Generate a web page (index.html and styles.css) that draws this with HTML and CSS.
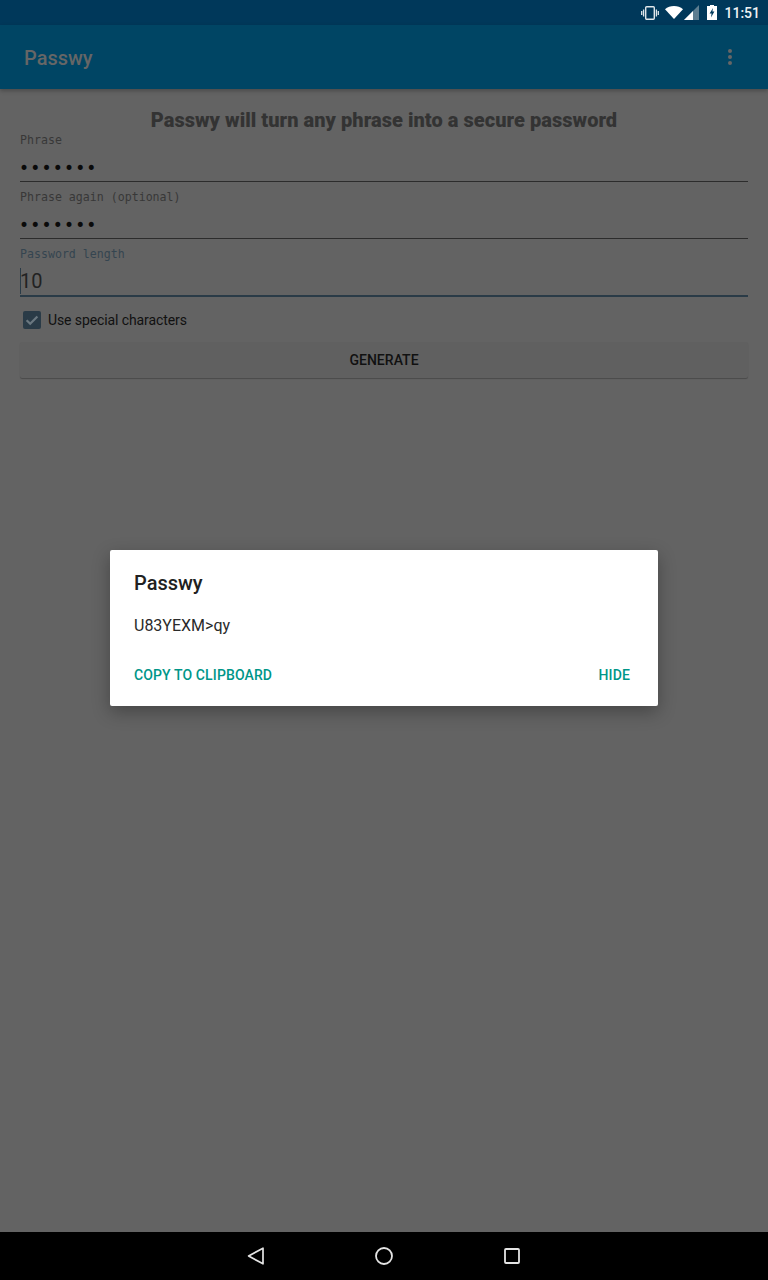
FILE: index.html
```html
<!DOCTYPE html>
<html lang="en">
<head>
<meta charset="utf-8">
<title>Passwy</title>
<link rel="stylesheet" href="styles.css">
</head>
<body>
<div class="screen">
  <div class="status">
    <svg class="ic-vib" width="18" height="14" viewBox="0 0 18 14"><rect x="4.7" y="0.7" width="8.6" height="12.6" rx="1" fill="none" stroke="#dfe6ea" stroke-width="1.4"/><path d="M2.6 3.5v7M0.7 5v4M15.4 3.5v7M17.3 5v4" stroke="#dfe6ea" stroke-width="1.3" fill="none"/></svg>
    <svg class="ic-wifi" width="18" height="13" viewBox="0 0 18 13"><path d="M0 3.2C2.5 1.1 5.6 0 9 0s6.5 1.1 9 3.2L9 13z" fill="#fff"/></svg>
    <svg class="ic-sig" width="15" height="15" viewBox="0 0 15 15"><path d="M15 0v15H0z" fill="#5d7d90"/><path d="M9 6v9H0z" fill="#fff"/></svg>
    <svg class="ic-bat" width="10" height="15" viewBox="0 0 10 15"><path d="M3 0h4v1h3v14H0V1h3z" fill="#fff"/><path d="M6 3L2.6 8.5h2L4 12.5 7.4 6.6h-2z" fill="#003a5c"/></svg>
    <span class="clock">11:51</span>
  </div>
  <header class="appbar">
    <span class="appname">Passwy</span>
    <span class="menu"><i></i><i></i><i></i></span>
  </header>
  <main class="content">
    <h1 class="headline">Passwy will turn any phrase into a secure password</h1>
    <div class="field">
      <label class="flabel">Phrase</label>
      <div class="fvalue dots">•••••••</div>
    </div>
    <div class="field">
      <label class="flabel">Phrase again (optional)</label>
      <div class="fvalue dots">•••••••</div>
    </div>
    <div class="field focus">
      <label class="flabel">Password length</label>
      <div class="fvalue num"><span class="caret"></span>10</div>
    </div>
    <div class="check">
      <span class="box"><svg width="18" height="18" viewBox="0 0 18 18"><path d="M3.6 9.2l3.6 3.6 7.2-7.4" fill="none" stroke="#6b7880" stroke-width="2.2"/></svg></span>
      <span class="cktext">Use special characters</span>
    </div>
    <div class="btn">GENERATE</div>
  </main>
  <nav class="navbar">
    <svg width="20" height="20" viewBox="0 0 20 20"><path d="M17 2.2v15.6L2.6 10z" fill="none" stroke="#e4e4e4" stroke-width="1.7" stroke-linejoin="round"/></svg>
    <svg width="20" height="20" viewBox="0 0 20 20"><circle cx="10" cy="10" r="8" fill="none" stroke="#e4e4e4" stroke-width="1.8"/></svg>
    <svg width="20" height="20" viewBox="0 0 20 20"><rect x="3" y="3" width="14" height="14" rx="1" fill="none" stroke="#e4e4e4" stroke-width="1.8"/></svg>
  </nav>
  <div class="overlay">
    <div class="dialog">
      <div class="dtitle">Passwy</div>
      <div class="dbody">U83YEXM&gt;qy</div>
      <div class="dactions"><span>COPY TO CLIPBOARD</span><span>HIDE</span></div>
    </div>
  </div>
</div>
</body>
</html>
```
FILE: styles.css
```css
* { box-sizing: border-box; }
html, body { margin: 0; padding: 0; }
body { font-family: Roboto, "Liberation Sans", sans-serif; }
.screen { position: relative; width: 768px; height: 1280px; display: flex; flex-direction: column; background: #636363; overflow: hidden; }
.status { height: 25px; flex: none; background: #00385a; display: flex; align-items: center; justify-content: flex-end; padding-right: 8px; color: #eef2f4; }
.ic-vib { margin-right: 6px; }
.ic-wifi { margin-right: 1px; }
.ic-sig { margin-right: 8px; }
.ic-bat { margin-right: 7px; }
.clock { font-size: 14px; font-weight: 500; }
.appbar { height: 64px; flex: none; background: #004564; display: flex; align-items: center; justify-content: space-between; padding: 0 36px 0 24px; box-shadow: 0 2px 4px rgba(0,0,0,.25); position: relative; }
.appname { font-size: 20px; line-height: 26px; font-weight: 500; color: #666; padding-top: 2px; }
.menu { display: flex; flex-direction: column; gap: 2px; }
.menu i { display: block; width: 4px; height: 4px; border-radius: 50%; background: #666; }
.content { flex: 1; padding: 0 20px; background: #636363; }
.headline { margin: 19px 0 -7px; height: 24px; font-size: 20px; line-height: 24px; font-weight: 900; letter-spacing: .05px; text-align: center; color: #333; }
.field { height: 57px; padding-top: 8px; border-bottom: 1px solid #2c2c2c; display: flex; flex-direction: column; }
.flabel { font-family: "DejaVu Sans Mono", monospace; font-size: 11.6px; line-height: 14px; color: #383838; }
.fvalue { flex: 1; }
.dots { font-family: "DejaVu Sans", sans-serif; font-size: 17px; letter-spacing: 1.2px; line-height: 16px; color: #0a0a0a; padding-top: 13px; margin-left: -1px; }
.focus { border-bottom: 2px solid #2a3b47; height: 58px; }
.focus .flabel { color: #354550; }
.num { font-size: 20px; line-height: 24px; font-weight: 400; color: #222; padding-top: 8px; position: relative; }
.caret { position: absolute; left: 0; top: 7px; width: 1px; height: 26px; background: #2a3b47; }
.check { display: flex; align-items: center; gap: 7px; margin: 13px 0 0 3px; height: 20px; font-size: 14px; color: #111; }
.cktext { letter-spacing: -.1px; }
.box { width: 18px; height: 18px; border-radius: 2px; background: #2a3b47; display: block; }
.box svg { display: block; }
.btn { margin-top: 12px; height: 36px; background: #606060; border-radius: 2px; box-shadow: 0 1px 1px rgba(0,0,0,.25); display: flex; align-items: center; justify-content: center; font-size: 14px; font-weight: 500; letter-spacing: .03px; color: #111; }
.navbar { height: 48px; flex: none; background: #000; display: flex; align-items: center; justify-content: center; gap: 108px; }
.overlay { position: absolute; left: 0; right: 0; top: 25px; bottom: 50px; display: flex; align-items: center; justify-content: center; }
.dialog { width: 548px; height: 156px; background: #fff; border-radius: 2px; box-shadow: 0 6px 18px rgba(0,0,0,.3); padding: 20px 28px 0 24px; color: #212121; }
.dtitle { font-size: 20px; font-weight: 500; line-height: 26px; }
.dbody { font-size: 16px; line-height: 20px; margin-top: 20px; color: #2a2a2a; }
.dactions { display: flex; justify-content: space-between; margin-top: 30px; font-size: 14px; line-height: 18px; font-weight: 500; letter-spacing: .12px; color: #009688; }
```
